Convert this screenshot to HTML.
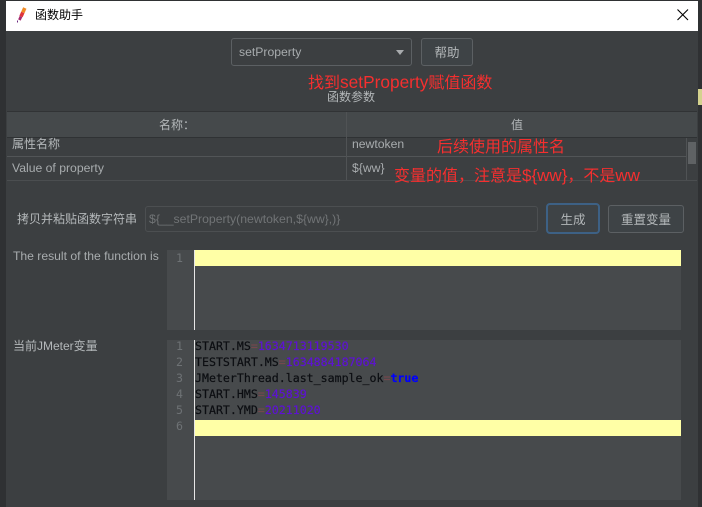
<!DOCTYPE html>
<html><head><meta charset="utf-8">
<style>
html,body{margin:0;padding:0;width:702px;height:507px;overflow:hidden;background:#2f3133}
*{box-sizing:border-box}
.a{position:absolute;white-space:nowrap}
body{font-family:"Liberation Sans","Noto Sans CJK SC",sans-serif;font-size:12px;color:#b4b8ba}
.red{color:#f52f2f;font-size:16px;line-height:20px}
.red span{font-size:17px}
.en{font-size:12.2px;color:#a8acae}
.btn{background:#3e4346;border:1px solid #5c6063;border-radius:3px;text-align:center;color:#b4b8ba;font-size:12.5px}
.gut{background:#474a4c;color:#6e7275;font-family:"DejaVu Sans Mono",monospace;font-size:11.6px;line-height:16px}
.code{font-family:"DejaVu Sans Mono",monospace;font-size:11.6px;line-height:16px;color:#0c0e12;left:195px;-webkit-text-stroke:.2px currentColor}
.code b{color:#0000ff}.code i{font-style:normal;color:#5e12d4}.code u{text-decoration:none;color:#74484e}
</style></head><body>
<div class="a" style="left:0;top:0;width:702px;height:507px;background:#2f3133"></div>
<div class="a" style="left:698px;top:89px;width:4px;height:16px;background:#d4d28e"></div>
<div class="a" style="left:6px;top:1px;width:692px;height:506px;background:#3c3f41"></div>
<div class="a" style="left:6px;top:1px;width:692px;height:30px;background:#fff"></div>
<svg class="a" style="left:16px;top:6px" width="12" height="17" viewBox="0 0 12 17"><path d="M8.8 2 L6.8 6.5" stroke="#f08a24" stroke-width="3.6"/><path d="M6.8 6.5 L5 10.5" stroke="#e0353a" stroke-width="3.6"/><path d="M5 10.5 L3.4 14" stroke="#a52a70" stroke-width="2.8"/><path d="M1.5 14.5v2" stroke="#6b2a80" stroke-width="1"/></svg>
<div class="a" style="left:35px;top:7px;font-size:12px;line-height:17px;color:#000">函数助手</div>
<svg class="a" style="left:677px;top:9px" width="12" height="12" viewBox="0 0 12 12"><path d="M.5 .5 11 11M11 .5 .5 11" stroke="#000" stroke-width="1.1" fill="none"/></svg>

<div class="a" style="left:231px;top:38px;width:181px;height:28px;border:1px solid #5c6063;border-radius:3px;background:#3c3f41"></div>
<div class="a en" style="left:239px;top:45px;line-height:15px">setProperty</div>
<div class="a" style="left:396px;top:50px;width:0;height:0;border-left:4px solid transparent;border-right:4px solid transparent;border-top:5px solid #a8abad"></div>
<div class="a btn" style="left:421px;top:38px;width:52px;height:28px;line-height:28px">帮助</div>
<div class="a red" style="left:308px;top:72px">找到<span style="font-size:17.3px">setProperty</span>赋值函数</div>
<div class="a" style="left:327px;top:89px;line-height:17px;color:#b4b8ba">函数参数</div>

<div class="a" style="left:7px;top:111px;width:690px;height:1px;background:#313335"></div>
<div class="a" style="left:7px;top:112px;width:690px;height:25px;background:#45494b"></div>
<div class="a" style="left:7px;top:137px;width:690px;height:1px;background:#2f3234"></div>
<div class="a" style="left:7px;top:156px;width:679px;height:1px;background:#525557"></div>
<div class="a" style="left:7px;top:180px;width:690px;height:1px;background:#4b4e50"></div>
<div class="a" style="left:346px;top:112px;width:1px;height:68px;background:#505355"></div>
<div class="a" style="left:686px;top:138px;width:1px;height:42px;background:#505355"></div>
<div class="a" style="left:688px;top:142px;width:8px;height:22px;background:#5f6264"></div>
<div class="a" style="left:159px;top:117px;line-height:17px">名称：</div>
<div class="a" style="left:511px;top:117px;line-height:17px">值</div>
<div class="a" style="left:12px;top:136px;line-height:17px">属性名称</div>
<div class="a en" style="left:12px;top:161px;line-height:15px">Value of property</div>
<div class="a en" style="left:352px;top:137px;line-height:15px">newtoken</div>
<div class="a en" style="left:352px;top:161px;line-height:15px">${ww}</div>
<div class="a red" style="left:437px;top:138px">后续使用的属性名</div>
<div class="a red" style="left:394px;top:166px">变量的值，注意是<span>${ww}</span>，不是<span>ww</span></div>

<div class="a" style="left:17px;top:211px;line-height:17px">拷贝并粘贴函数字符串</div>
<div class="a" style="left:145px;top:206px;width:393px;height:26px;border:1px solid #4c4f51;border-radius:3px;background:#3c3f41"></div>
<div class="a" style="left:149px;top:212px;line-height:15px;color:#717476;font-size:12.25px">${__setProperty(newtoken,${ww},)}</div>
<div class="a btn" style="left:546px;top:203px;width:54px;height:31px;line-height:30px;border:2px solid #3d6185;border-radius:4px">生成</div>
<div class="a btn" style="left:608px;top:205px;width:76px;height:28px;line-height:28px">重置变量</div>

<div class="a en" style="left:13px;top:249px;line-height:15px;font-size:12.15px">The result of the function is</div>
<div class="a" style="left:167px;top:250px;width:514px;height:80px;background:#474a4c"></div>
<div class="a" style="left:195px;top:250px;width:486px;height:16px;background:#ffffa6"></div>
<div class="a" style="left:194px;top:250px;width:1px;height:80px;background:#e6e6e6"></div>
<div class="a gut" style="left:176px;top:250px">1</div>

<div class="a" style="left:13px;top:338px;line-height:17px">当前JMeter变量</div>
<div class="a" style="left:167px;top:340px;width:514px;height:160px;background:#474a4c"></div>
<div class="a" style="left:195px;top:420px;width:486px;height:16px;background:#ffffa6"></div>
<div class="a" style="left:194px;top:340px;width:1px;height:160px;background:#e6e6e6"></div>
<div class="a gut" style="left:176px;top:338px;background:none">1<br>2<br>3<br>4<br>5<br>6</div>
<div class="a code" style="top:338px">START.MS<u>=</u><i>1634713119530</i><br>TESTSTART.MS<u>=</u><i>1634884187064</i><br>JMeterThread.last_sample_ok<u>=</u><b>true</b><br>START.HMS<u>=</u><i>145839</i><br>START.YMD<u>=</u><i>20211020</i></div>
</body></html>
